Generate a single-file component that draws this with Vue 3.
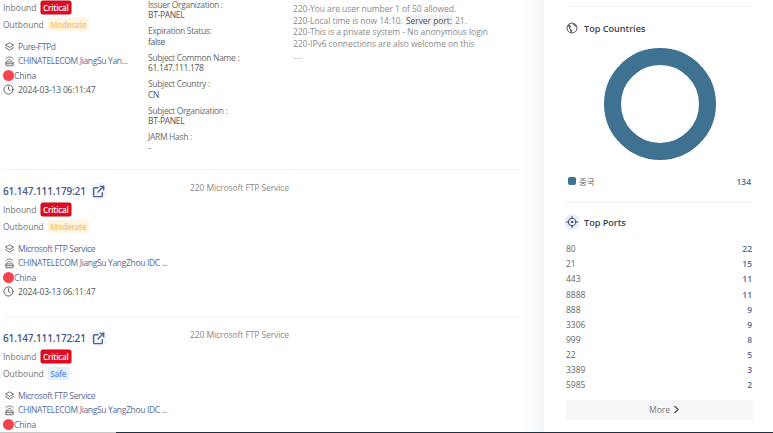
<script setup>
const results = [
  {
    ip: '',
    outbound: 'Moderate',
    service: 'Pure-FTPd',
    isp: 'CHINATELECOM JiangSu Yan...',
    date: '2024-03-13 06:11:47',
    cert: [
      ['Issuer Organization :', 'BT-PANEL'],
      ['Expiration Status:', 'false'],
      ['Subject Common Name :', '61.147.111.178'],
      ['Subject Country :', 'CN'],
      ['Subject Organization :', 'BT-PANEL'],
      ['JARM Hash :', '-'],
    ],
  },
  {
    ip: '61.147.111.179:21',
    outbound: 'Moderate',
    service: 'Microsoft FTP Service',
    isp: 'CHINATELECOM JiangSu YangZhou IDC ...',
    date: '2024-03-13 06:11:47',
    banner: '220 Microsoft FTP Service',
  },
  {
    ip: '61.147.111.172:21',
    outbound: 'Safe',
    service: 'Microsoft FTP Service',
    isp: 'CHINATELECOM JiangSu YangZhou IDC ...',
    date: '',
    banner: '220 Microsoft FTP Service',
  },
]

const ports = [
  ['80', 22], ['21', 15], ['443', 11], ['8888', 11], ['888', 9],
  ['3306', 9], ['999', 8], ['22', 5], ['3389', 3], ['5985', 2],
]
</script>

<template>
  <div class="page">
    <div class="main">
      <div class="list">
        <div v-for="(r, i) in results" :key="i" class="result" :class="{ first: !r.ip }">
          <div class="info" :class="{ narrow: r.cert }">
            <div v-if="r.ip" class="ip-row">
              <span class="ip">{{ r.ip }}</span>
              <span class="open-btn">
                <svg width="13" height="13" viewBox="0 0 24 24" fill="none" stroke="#4a6496" stroke-width="2.6" stroke-linecap="round" stroke-linejoin="round">
                  <path d="M19 14v6a1.5 1.5 0 0 1-1.5 1.500h-13A1.500 1.500 0 0 1 3 20V6.500A1.500 1.500 0 0 1 4.500 5H11" />
                  <path d="M15 2.500h6.500V9" />
                  <path d="M21.500 2.500L11 13" />
                </svg>
              </span>
            </div>
            <div class="risk">
              <span class="risk-label">Inbound</span>
              <span class="tag critical">Critical</span>
            </div>
            <div class="risk">
              <span class="risk-label">Outbound</span>
              <span class="tag" :class="r.outbound.toLowerCase()">{{ r.outbound }}</span>
            </div>
            <div class="meta">
              <div class="meta-row">
                <svg class="meta-icon" width="11" height="11" viewBox="0 0 24 24" fill="none" stroke="#666" stroke-width="2" stroke-linejoin="round">
                  <path d="M12 4l9 5-9 5-9-5z" />
                  <path d="M5 13l-2 1.500 9 5.500 9-5.500-2-1.500" />
                </svg>
                <span class="link">{{ r.service }}</span>
              </div>
              <div class="meta-row">
                <svg class="meta-icon" width="11" height="12" viewBox="0 0 24 24" fill="none" stroke="#666" stroke-width="2" stroke-linecap="round">
                  <path d="M4 7c4.500-5 11.500-5 16 0" />
                  <path d="M8 10.500c2.500-2.500 5.500-2.500 8 0" />
                  <rect x="4" y="14" width="16" height="8.500" rx="1" />
                  <path d="M4 18h16" />
                </svg>
                <span class="link">{{ r.isp }}</span>
              </div>
              <div class="meta-row country">
                <span class="flag"></span>
                <span class="link">China</span>
              </div>
              <div v-if="r.date" class="meta-row date">
                <svg class="meta-icon clock" width="11" height="11" viewBox="0 0 24 24" fill="none" stroke="#555" stroke-width="2" stroke-linecap="round">
                  <circle cx="12" cy="12" r="10" />
                  <path d="M12 6v6l4 3" />
                </svg>
                <span>{{ r.date }}</span>
              </div>
            </div>
          </div>

          <div v-if="r.cert" class="cert">
            <div v-for="c in r.cert" :key="c[0]" class="cert-item">
              <div class="cert-label">{{ c[0] }}</div>
              <div class="cert-value">{{ c[1] }}</div>
            </div>
          </div>

          <div v-if="r.cert" class="banner-lines">
            <div>220-You are user number 1 of 50 allowed.</div>
            <div>220-Local time is now 14:10. <span class="hl">Server port:</span> 21.</div>
            <div>220-This is a private system - No anonymous login</div>
            <div>220-IPv6 connections are also welcome on this</div>
            <div class="dots">...</div>
          </div>
          <div v-else class="banner">{{ r.banner }}</div>
        </div>
      </div>

      <div class="gutter"></div>

      <aside class="side">
        <div class="section countries">
          <div class="section-title">
            <span class="title-icon">
              <svg width="12" height="12" viewBox="0 0 24 24" fill="none" stroke="#555" stroke-width="2">
                <circle cx="12" cy="12" r="10" />
                <path d="M4 6c3 0 5 1 5 3s-3 2-2 4 4 1 4 4 0 3-1 4.500" fill="#555" />
                <path d="M15 3c-1 2 0 3 2 4s3 2 4 1" fill="#555" />
              </svg>
            </span>
            Top Countries
          </div>
          <div class="donut-wrap">
            <div class="donut"></div>
          </div>
          <div class="legend">
            <span class="legend-name"><span class="swatch"></span>중국</span>
            <span class="count">134</span>
          </div>
        </div>

        <div class="section ports">
          <div class="section-title">
            <span class="title-icon tinted">
              <svg width="12" height="12" viewBox="0 0 24 24" fill="none" stroke="#3c4658" stroke-width="2" stroke-linecap="round">
                <circle cx="12" cy="12" r="7.500" />
                <circle cx="12" cy="12" r="1.500" fill="#3c4658" />
                <path d="M12 1v4M12 19v4M1 12h4M19 12h4" />
              </svg>
            </span>
            Top Ports
          </div>
          <div class="port-list">
            <div v-for="p in ports" :key="p[0]" class="port-row">
              <span>{{ p[0] }}</span>
              <span class="count">{{ p[1] }}</span>
            </div>
          </div>
          <div class="more">
            More
            <svg width="7" height="9" viewBox="0 0 7 9" fill="none" stroke="#555" stroke-width="1.400">
              <path d="M1.500 1l3.500 3.500-3.500 3.500" />
            </svg>
          </div>
        </div>
      </aside>
    </div>

    <div class="strip">
      <div class="strip-light"></div>
      <div class="strip-dark"></div>
    </div>
  </div>
</template>

<style scoped>
.page {
  width: 773px;
  height: 433px;
  overflow: hidden;
  display: flex;
  flex-direction: column;
  background: #fff;
  font-family: "Open Sans", "Noto Sans CJK KR", sans-serif;
  font-size: 8.500px;
  color: #666;
}

.main {
  display: flex;
  height: 432px;
  overflow: hidden;
}

.list {
  width: 517px;
  margin-left: 3px;
  flex-shrink: 0;
}

.result {
  display: flex;
  height: 147px;
  box-sizing: border-box;
  border-bottom: 1px solid #f0f1f3;
  padding-top: 11px;
}
.result.first {
  height: 171px;
  padding-top: 0;
  margin-top: -1px;
}

.info {
  width: 187px;
  flex-shrink: 0;
}
.info.narrow {
  width: 145px;
}

.ip-row {
  display: flex;
  align-items: center;
  height: 20px;
  gap: 4px;
}
.ip {
  font-size: 10px;
  font-weight: 600;
  letter-spacing: -0.150px;
  color: #46598a;
}
.open-btn {
  width: 18px;
  height: 18px;
  display: flex;
  align-items: center;
  justify-content: center;
  border-radius: 50%;
  background: #f5f6fa;
}

.risk {
  display: flex;
  align-items: center;
  gap: 4px;
  height: 17px;
}
.risk-label {
  color: #747474;
}
.tag {
  padding: 0 2.500px;
  line-height: 13px;
  border-radius: 2px;
  font-size: 8px;
  font-weight: 600;
  letter-spacing: -0.200px;
}
.tag.critical {
  background: #df0a1e;
  color: #fff;
  box-shadow: 0 0 0 0.500px #b5081a;
}
.tag.moderate {
  background: #fff5e1;
  color: #fcc35a;
}
.tag.safe {
  background: #e6effc;
  color: #5b8def;
}

.meta {
  margin-top: 6px;
}
.meta-row {
  display: flex;
  align-items: center;
  gap: 3px;
  height: 14.500px;
  white-space: nowrap;
  letter-spacing: -0.340px;
}
.meta-icon {
  margin-left: 1px;
  flex-shrink: 0;
}
.link {
  color: #5a6a94;
}
.country {
  gap: 0;
  letter-spacing: -0.100px;
}
.flag {
  width: 11px;
  height: 11px;
  border-radius: 50%;
  background: #f4434f;
  flex-shrink: 0;
}
.date {
  color: #555;
  gap: 4px;
  letter-spacing: -0.150px;
}
.clock {
  margin-left: 0;
}

.cert {
  width: 145px;
  flex-shrink: 0;
  padding-top: 1px;
  letter-spacing: -0.330px;
}
.cert-item {
  margin-bottom: 5.900px;
  line-height: 10.300px;
}
.cert-label {
  color: #6b6b6b;
}
.cert-value {
  color: #555;
}

.banner-lines {
  line-height: 11.700px;
  color: #8a8a8a;
  padding-top: 4px;
  letter-spacing: -0.060px;
}
.hl {
  background: #f1f1f1;
  color: #555;
  padding: 0 1px;
}
.dots {
  padding-left: 1px;
  letter-spacing: 0.500px;
}
.banner {
  color: #8a8a8a;
  line-height: 12px;
  margin-top: 1px;
  letter-spacing: -0.080px;
}

.gutter {
  width: 24px;
  flex-shrink: 0;
  background: linear-gradient(to right, #fff, #f4f6f8);
}

.side {
  width: 229px;
  box-sizing: border-box;
  padding: 6px 20px 0 22px;
  flex-shrink: 0;
}
.section {
  border-top: 1px solid #f1f2f4;
}
.countries {
  height: 196px;
  padding-top: 13px;
  box-sizing: border-box;
}

.section-title {
  display: flex;
  align-items: center;
  gap: 4px;
  height: 16px;
  font-size: 9.100px;
  font-weight: 600;
  color: #3a3f4a;
}
.title-icon {
  width: 16px;
  height: 16px;
  display: flex;
  align-items: center;
  justify-content: center;
  border-radius: 50%;
  margin-left: -2px;
}
.title-icon.tinted {
  background: #e6f0fd;
}

.donut-wrap {
  display: flex;
  justify-content: center;
  margin-top: 12px;
}
.donut {
  width: 112px;
  height: 112px;
  box-sizing: border-box;
  border: 17.500px solid #3f7191;
  border-radius: 50%;
}

.legend {
  display: flex;
  justify-content: space-between;
  align-items: center;
  margin-top: 15px;
  height: 12px;
  padding-right: 2px;
}
.legend-name {
  display: flex;
  align-items: center;
  gap: 3px;
  padding-left: 2px;
}
.swatch {
  width: 8px;
  height: 8px;
  border-radius: 2px;
  background: #3f7191;
}
.count {
  color: #5a6a9a;
  font-weight: 600;
}

.ports {
  padding-top: 11px;
}
.port-list {
  margin-top: 11px;
  padding-right: 1px;
}
.port-row {
  display: flex;
  justify-content: space-between;
  align-items: center;
  height: 15.170px;
}

.more {
  margin-top: 7px;
  height: 20px;
  display: flex;
  align-items: center;
  justify-content: center;
  gap: 3px;
  padding-left: 10px;
  border-radius: 2px;
  background: #f4f6f8;
  color: #777;
}

.strip {
  display: flex;
  height: 1px;
}
.strip-light {
  width: 116px;
  background: #c9c9c9;
}
.strip-dark {
  flex: 1;
  background: #1f3140;
}
</style>
